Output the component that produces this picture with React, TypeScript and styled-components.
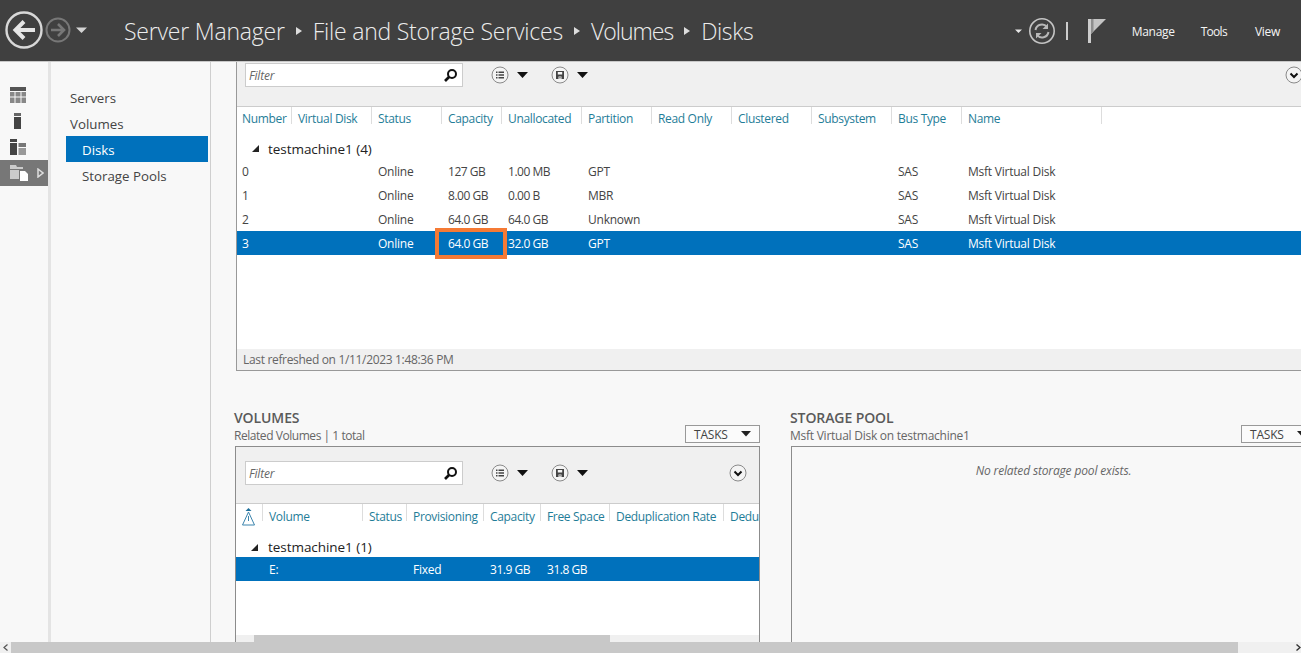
import React from "react";
import styled, { createGlobalStyle } from "styled-components";

const Global = createGlobalStyle`
  html, body { margin: 0; padding: 0; background: #fff; }
  body { font-family: "Open Sans", "Noto Sans", "Liberation Sans", sans-serif; font-size: 12px; color: #444; }
  * { box-sizing: border-box; }
`;

const Window = styled.div`
  width: 1301px; height: 653px; overflow: hidden; display: flex; flex-direction: column; background: #f8f8f8;
`;
const TopBar = styled.header`
  height: 62px; flex: none; background: #404040; border-bottom: 1px solid #c8c8c8;
  display: flex; align-items: center; color: #eee; padding-right: 21px;
`;
const NavButtons = styled.div`
  width: 124px; flex: none; height: 61px; display: flex; align-items: center; padding: 0 0 1px 5px;
`;
const Crumbs = styled.nav`
  flex: 1; display: flex; align-items: center; font-size: 23px; font-weight: 300; color: #ededed; height: 61px;
`;
const Crumb = styled.span<{ $ls?: number }>`
  letter-spacing: ${(p) => p.$ls ?? -0.21}px;
`;
const CrumbArrow = styled.svg`
  width: 6px; height: 8px; margin: 0 11px; flex: none;
`;
const StatusIcons = styled.div`
  display: flex; align-items: center; height: 61px;
`;
const Divider = styled.span`
  width: 2px; height: 18px; background: #ccc; margin: 0 20px 0 10px;
`;
const MenuItem = styled.span<{ $gap: number; $ls?: number }>`
  font-size: 12px; letter-spacing: ${(p) => p.$ls ?? -0.3}px; color: #f4f4f4; margin: 2px 0 0 ${(p) => p.$gap}px;
`;

const Main = styled.div`
  flex: 1; min-height: 0; display: flex;
`;
const Rail = styled.aside`
  width: 51px; flex: none; border-right: 3px solid #e4e4e4; padding-top: 20px; display: flex; flex-direction: column; background: #f8f8f8;
`;
const RailItem = styled.div<{ $active?: boolean }>`
  height: 26px; display: flex; align-items: center; padding-left: 10px; gap: 9px; background: ${(p) => (p.$active ? "#777" : "transparent")};
`;
const SideNav = styled.nav`
  width: 160px; flex: none; border-right: 1px solid #cfcfcf; padding: 22px 2px 0 15px; font-size: 13.3px; background: #f8f8f8;
`;
const SideItem = styled.div<{ $active?: boolean; $sub?: boolean }>`
  height: 26px; line-height: 29px; padding-left: ${(p) => (p.$sub ? 16 : 4)}px;
  background: ${(p) => (p.$active ? "#0071bc" : "transparent")}; color: ${(p) => (p.$active ? "#fff" : "#444")};
`;
const Content = styled.main`
  flex: 1; min-width: 0; display: flex; flex-direction: column; overflow: hidden; background: #f8f8f8;
`;
const TopPanel = styled.section`
  margin-left: 25px; flex: none; border-left: 1px solid #999; border-bottom: 1px solid #999; background: #fff;
`;
const Toolbar = styled.div<{ $h: number; $pt: number; $pl: number }>`
  height: ${(p) => p.$h}px; background: #f0f0f0; border-bottom: 1px solid #ccc; display: flex; align-items: flex-start; padding: ${(p) => p.$pt}px 0 0 ${(p) => p.$pl}px;
`;
const FilterBox = styled.div`
  width: 218px; height: 24px; background: #fff; border: 1px solid #ccc; display: flex; align-items: center; justify-content: space-between;
  padding: 0 4px 0 3px; font-style: italic; color: #666; font-size: 12px; letter-spacing: -0.2px;
`;
const ToolGroup = styled.div<{ $ml: number }>`
  display: flex; align-items: center; height: 24px; margin-left: ${(p) => p.$ml}px; gap: 8px;
`;
const Chevron = styled.div<{ $mr: number }>`
  margin-left: auto; height: 24px; display: flex; align-items: center; margin-right: ${(p) => p.$mr}px;
`;
const Grid = styled.div<{ $cols: string; $h: number; $sel?: boolean; $hd?: boolean; $open?: boolean }>`
  display: grid; grid-template-columns: ${(p) => p.$cols}; height: ${(p) => p.$h}px; align-items: center;
  background: ${(p) => (p.$sel ? "#0071bc" : "transparent")}; color: ${(p) => (p.$sel ? "#fff" : p.$hd ? "#1f7d98" : "#444")};
  letter-spacing: ${(p) => (p.$hd ? -0.33 : -0.23)}px; white-space: nowrap; overflow: ${(p) => (p.$open ? "visible" : "hidden")};
`;
const HeadCell = styled.div<{ $nosep?: boolean }>`
  height: 100%; padding: 0 0 1px 6px; display: flex; align-items: center; overflow: hidden;
  position: relative;
  &:first-child { padding-left: 5px; }
  &::after { content: ""; display: ${(p) => (p.$nosep ? "none" : "block")}; position: absolute; right: 0; top: 0; width: 1px; height: 17px; background: #ddd; }
`;
const Cell = styled.div<{ $num?: boolean }>`
  padding-left: 6px; position: relative; height: 100%; display: flex; align-items: center; overflow: visible;
  ${(p) => (p.$num ? "letter-spacing: -0.48px;" : "")}
  &:first-child { padding-left: 5px; }
`;
const Callout = styled.div`
  position: absolute; left: -7px; top: -3px; width: 72px; height: 31px; border: 4px solid #f57a35;
`;
const RowsTop = styled.div`
  height: 218px; background: #fff;
`;
const GroupRow = styled.div<{ $h: number; $pt: number; $gap: number }>`
  height: ${(p) => p.$h}px; padding: ${(p) => p.$pt}px 0 0 15px; display: flex; align-items: center; gap: ${(p) => p.$gap}px; font-size: 13.5px; color: #222; letter-spacing: -0.05px;
`;
const StatusBar = styled.div`
  height: 21px; background: #f0f0f0; padding-left: 6px; display: flex; align-items: center; color: #666; letter-spacing: -0.33px; font-size: 12px;
`;
const Lower = styled.div`
  flex: 1; min-height: 0; display: flex; margin-top: 40px; padding-left: 23px; gap: 30px;
`;
const Section = styled.section<{ $w: number }>`
  width: ${(p) => p.$w}px; flex: none; display: flex; flex-direction: column; min-height: 0;
`;
const SectionHead = styled.div`
  height: 35px; flex: none; position: relative; color: #666;
`;
const SectionTitle = styled.h2`
  margin: 0; font-size: 14px; line-height: 14px; font-weight: 600; color: #5a5a5a; letter-spacing: -0.1px;
`;
const SectionSub = styled.div<{ $tight?: boolean }>`
  font-size: 12px; line-height: 21px; letter-spacing: ${(p) => (p.$tight ? -0.45 : -0.25)}px; color: #666;
`;
const Tasks = styled.div`
  position: absolute; right: 0; top: 14px; width: 75px; height: 18px; border: 1px solid #999; background: #fbfbfb;
  display: flex; align-items: center; padding-left: 8px; gap: 13px; color: #444; letter-spacing: -0.2px; font-size: 12px;
`;
const PanelBox = styled.div<{ $bg: string }>`
  flex: 1; min-height: 0; margin-left: 1px; border: 1px solid #8c8c8c; border-bottom: none; background: ${(p) => p.$bg}; display: flex; flex-direction: column; position: relative;
`;
const Empty = styled.div`
  text-align: center; font-style: italic; color: #666; padding-top: 15px; letter-spacing: -0.15px; font-size: 12px;
`;
const RowsBottom = styled.div`
  flex: 1; min-height: 0; background: #fff; display: flex; flex-direction: column;
`;
const MiniScroll = styled.div`
  height: 7px; flex: none; margin-top: auto; background: #f0f0f0; padding-left: 18px;
`;
const MiniThumb = styled.div`
  width: 356px; height: 7px; background: #c8c8c8;
`;
const PageScroll = styled.div`
  height: 11px; flex: none; display: flex; background: #f0f0f0; align-items: center;
`;
const PageThumb = styled.div`
  margin-left: 11px; width: 1227px; height: 11px; background: #c8c8c8;
`;
const ScrollArrow = styled.svg<{ $end?: boolean }>`
  width: 5px; height: 7px; flex: none; ${(p) => (p.$end ? "margin-left: auto;" : "margin: 0 -8px 0 3px;")}
`;

const Caret = ({ size = 11, color = "#111" }: { size?: number; color?: string }) => (
  <svg width={size} height={size * 0.55} viewBox="0 0 11 6"><path d="M0 0h11L5.500 6z" fill={color} /></svg>
);
const Ring = ({ children }: { children: React.ReactNode }) => (
  <svg width="18" height="18" viewBox="0 0 18 18">
    <circle cx="9" cy="9" r="8" fill="#f4f4f4" stroke="#8a8a8a" />
    {children}
  </svg>
);
const ListGlyph = () => (
  <Ring><path d="M5 5.500h1.500V7H5zM5 8.300h1.500v1.500H5zM5 11h1.500v1.500H5zM7.500 5.500H13V7H7.500zM7.500 8.300H13v1.500H7.500zM7.500 11H13v1.500H7.500z" fill="#444" /></Ring>
);
const SaveGlyph = () => (
  <Ring><path d="M5 5h8v8H5z" fill="#444" /><path d="M6.800 6h4.400v2.600H6.800zM7.500 10.400h3V13h-3z" fill="#f4f4f4" /><path d="M8.500 11h1v1.500h-1z" fill="#444" /></Ring>
);
const ChevronGlyph = () => (
  <Ring><path d="M5.500 7.500L9 11l3.500-3.500" fill="none" stroke="#111" strokeWidth="2" /></Ring>
);
const Search = () => (
  <svg width="15" height="15" viewBox="0 0 15 15"><circle cx="9" cy="6" r="4" fill="none" stroke="#111" strokeWidth="2" /><path d="M6 9l-4 4" stroke="#111" strokeWidth="2.600" /></svg>
);
const GroupArrow = () => (
  <svg width="7" height="7" viewBox="0 0 7 7"><path d="M7 0v7H0z" fill="#222" /></svg>
);
const CrumbSep = () => (
  <CrumbArrow viewBox="0 0 6 8"><path d="M0 0l6 4-6 4z" fill="#ddd" /></CrumbArrow>
);

const Tools = ({ chevronRight }: { chevronRight: number }) => (
  <>
    <FilterBox>Filter<Search /></FilterBox>
    <ToolGroup $ml={28}><ListGlyph /><Caret /></ToolGroup>
    <ToolGroup $ml={23}><SaveGlyph /><Caret /></ToolGroup>
    <Chevron $mr={chevronRight}><ChevronGlyph /></Chevron>
  </>
);

const diskCols = "55px 80px 70px 60px 80px 70px 80px 80px 80px 70px 140px 1fr";
const diskHead = ["Number", "Virtual Disk", "Status", "Capacity", "Unallocated", "Partition", "Read Only", "Clustered", "Subsystem", "Bus Type", "Name"];
const disks = [
  ["0", "", "Online", "127 GB", "1.00 MB", "GPT", "", "", "", "SAS", "Msft Virtual Disk"],
  ["1", "", "Online", "8.00 GB", "0.00 B", "MBR", "", "", "", "SAS", "Msft Virtual Disk"],
  ["2", "", "Online", "64.0 GB", "64.0 GB", "Unknown", "", "", "", "SAS", "Msft Virtual Disk"],
  ["3", "", "Online", "64.0 GB", "32.0 GB", "GPT", "", "", "", "SAS", "Msft Virtual Disk"],
];
const volCols = "27px 100px 44px 77px 57px 69px 114px 1fr";
const volHead = ["", "Volume", "Status", "Provisioning", "Capacity", "Free Space", "Deduplication Rate", "Dedu"];
const volRow = ["", "E:", "", "Fixed", "31.9 GB", "31.8 GB", "", ""];

export default function App() {
  return (
    <Window>
      <Global />
      <TopBar>
        <NavButtons>
          <svg width="92" height="40" viewBox="0 0 92 40">
            <circle cx="19" cy="20" r="17.500" fill="none" stroke="#d8d8d8" strokeWidth="2.400" />
            <path d="M30 20H11M19 11.500L10.500 20l8.500 8.500" fill="none" stroke="#e6e6e6" strokeWidth="4" />
            <circle cx="53" cy="20" r="11.500" fill="none" stroke="#777" strokeWidth="2" />
            <path d="M46 20h12M53 14l6 6-6 6" fill="none" stroke="#777" strokeWidth="2.600" />
            <path d="M71 17.500h11l-5.500 5.500z" fill="#d4d4d4" />
          </svg>
        </NavButtons>
        <Crumbs>
          <Crumb>Server Manager</Crumb>
          <CrumbSep />
          <Crumb>File and Storage Services</Crumb>
          <CrumbSep />
          <Crumb $ls={-1}>Volumes</Crumb>
          <CrumbSep />
          <Crumb $ls={-0.4}>Disks</Crumb>
        </Crumbs>
        <StatusIcons>
          <svg width="41" height="28" viewBox="0 0 41 28">
            <path d="M0 12.500h7L3.500 16z" fill="#e6e6e6" />
            <circle cx="27" cy="14" r="12.200" fill="none" stroke="#c4c4c4" strokeWidth="1.600" />
            <path d="M20.500 13a6.500 6.500 0 0 1 11.500-3M33.500 15a6.500 6.500 0 0 1-11.500 3" fill="none" stroke="#b8b8b8" strokeWidth="2" />
            <path d="M33 6.500v5.500h-5.500zM21 21.500V16h5.500z" fill="#b8b8b8" />
          </svg>
          <Divider />
          <svg width="18" height="24" viewBox="0 0 18 24">
            <path d="M3 0h15L3 15z" fill="#c4c4c4" />
            <path d="M3 0h2.500v12.500L3 15z" fill="#8e8e8e" />
            <path d="M0 0h3v24H0z" fill="#cdcdcd" />
          </svg>
        </StatusIcons>
        <MenuItem $gap={26}>Manage</MenuItem>
        <MenuItem $gap={26} $ls={-0.7}>Tools</MenuItem>
        <MenuItem $gap={28}>View</MenuItem>
      </TopBar>
      <Main>
        <Rail>
          <RailItem>
            <svg width="16" height="16" viewBox="0 0 16 16"><path d="M0 0h16v4H0z" fill="#555" /><path d="M0 5h4.500v4.500H0zM5.500 5h5v4.500h-5zM11.500 5H16v4.500h-4.500zM0 10.500h4.500V16H0zM5.500 10.500h5V16h-5zM11.500 10.500H16V16h-4.500z" fill="#888" /></svg>
          </RailItem>
          <RailItem>
            <svg width="16" height="16" viewBox="0 0 16 16"><path d="M4 0h7v3H4z" fill="#666" /><path d="M4 4h7v12H4z" fill="#444" /></svg>
          </RailItem>
          <RailItem>
            <svg width="16" height="16" viewBox="0 0 16 16"><path d="M0 0h7v3H0zM0 4h7v12H0z" fill="#444" /><path d="M8.500 4H16v4H8.500z" fill="#777" /><path d="M8.500 9H16v7H8.500z" fill="#999" /></svg>
          </RailItem>
          <RailItem $active>
            <svg width="18" height="16" viewBox="0 0 18 16"><path d="M0 0h6l1 2h6v2H0zM0 5h9v9H0z" fill="#ccc" /><path d="M10 6h5l3 3v7h-8z" fill="#fff" /></svg>
            <svg width="7" height="10" viewBox="0 0 7 10"><path d="M1 1l5 4-5 4z" fill="none" stroke="#ddd" strokeWidth="1.500" /></svg>
          </RailItem>
        </Rail>
        <SideNav>
          <SideItem>Servers</SideItem>
          <SideItem>Volumes</SideItem>
          <SideItem $active $sub>Disks</SideItem>
          <SideItem $sub>Storage Pools</SideItem>
        </SideNav>
        <Content>
          <TopPanel>
            <Toolbar $h={45} $pt={1} $pl={8}>
              <Tools chevronRight={-2} />
            </Toolbar>
            <Grid $cols={diskCols} $h={24} $hd>
              {diskHead.map((h) => <HeadCell key={h}>{h}</HeadCell>)}
            </Grid>
            <RowsTop>
              <GroupRow $h={28} $pt={7} $gap={9}><GroupArrow />testmachine1 (4)</GroupRow>
              {disks.map((row, i) => (
                <Grid key={i} $cols={diskCols} $h={24} $sel={i === 3} $open={i === 3}>
                  {row.map((c, j) => (
                    <Cell key={j} $num={j === 3 || j === 4}>{c}{i === 3 && j === 3 ? <Callout /> : null}</Cell>
                  ))}
                </Grid>
              ))}
            </RowsTop>
            <StatusBar>Last refreshed on 1/11/2023 1:48:36 PM</StatusBar>
          </TopPanel>
          <Lower>
            <Section $w={526}>
              <SectionHead>
                <SectionTitle>VOLUMES</SectionTitle>
                <SectionSub $tight>Related Volumes | 1 total</SectionSub>
                <Tasks>TASKS<Caret size={10} color="#222" /></Tasks>
              </SectionHead>
              <PanelBox $bg="#fff">
                <Toolbar $h={57} $pt={14} $pl={9}>
                  <Tools chevronRight={12} />
                </Toolbar>
                <Grid $cols={volCols} $h={26} $hd>
                  {volHead.map((h, i) => (
                    <HeadCell key={i} $nosep={i === 7}>
                      {i === 0 ? (
                        <svg width="15" height="18" viewBox="0 0 15 18">
                          <path d="M7.500 0l3 3h-6z" fill="#1f6f9a" />
                          <path d="M7.500 4L13.500 17h-12z" fill="none" stroke="#3b84ad" />
                          <path d="M7.500 8v5" stroke="#3b84ad" />
                        </svg>
                      ) : h}
                    </HeadCell>
                  ))}
                </Grid>
                <RowsBottom>
                  <GroupRow $h={27} $pt={7} $gap={10}><GroupArrow />testmachine1 (1)</GroupRow>
                  <Grid $cols={volCols} $h={24} $sel>
                    {volRow.map((c, i) => <Cell key={i} $num={i === 4 || i === 5}>{c}</Cell>)}
                  </Grid>
                  <MiniScroll><MiniThumb /></MiniScroll>
                </RowsBottom>
              </PanelBox>
            </Section>
            <Section $w={526}>
              <SectionHead>
                <SectionTitle>STORAGE POOL</SectionTitle>
                <SectionSub>Msft Virtual Disk on testmachine1</SectionSub>
                <Tasks>TASKS<Caret size={10} color="#222" /></Tasks>
              </SectionHead>
              <PanelBox $bg="#f8f8f8">
                <Empty>No related storage pool exists.</Empty>
              </PanelBox>
            </Section>
          </Lower>
        </Content>
      </Main>
      <PageScroll>
        <ScrollArrow viewBox="0 0 5 7"><path d="M4.500 0.500L1 3.500l3.500 3" fill="none" stroke="#555" strokeWidth="1.200" /></ScrollArrow>
        <PageThumb />
        <ScrollArrow $end viewBox="0 0 5 7"><path d="M0.500 0.500L4 3.500l-3.500 3" fill="none" stroke="#333" strokeWidth="1.400" /></ScrollArrow>
      </PageScroll>
    </Window>
  );
}
